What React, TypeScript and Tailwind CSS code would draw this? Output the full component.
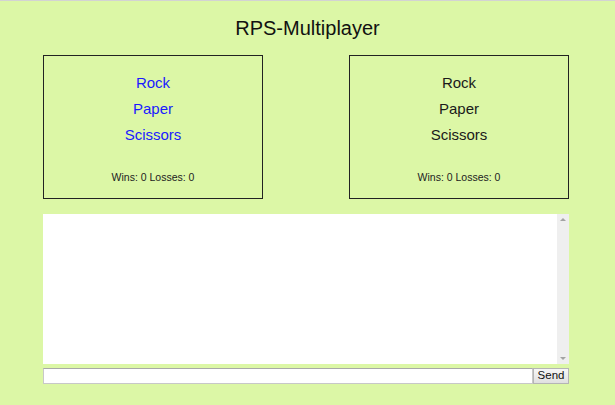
import React from "react";

function PlayerBox({ blue }: { blue?: boolean }) {
  const choiceColor = blue ? "text-[#1a1aff]" : "text-[#1a1a1a]";
  return (
    <div className="w-[220px] h-[144px] border border-[#222] flex flex-col items-center pt-[14px]">
      <div className={`flex flex-col items-center text-[15px] leading-[26px] ${choiceColor}`}>
        <span>Rock</span>
        <span>Paper</span>
        <span>Scissors</span>
      </div>
      <div className="mt-[23px] text-[10.5px] leading-[13px] text-[#222]">Wins: 0 Losses: 0</div>
    </div>
  );
}

export default function App() {
  return (
    <div className="min-h-[405px] bg-[#dcf7a6] border-t border-[#d3d3d3] font-['Liberation_Sans',Arial,sans-serif]">
      <h1 className="text-center text-[20px] leading-[23px] pt-[16px] text-[#111]">RPS-Multiplayer</h1>
      <div className="ml-[43px] w-[526px] mt-[15px]">
        <div className="flex justify-between">
          <PlayerBox blue />
          <PlayerBox />
        </div>
        <div className="mt-[15px] flex h-[150px] bg-white">
          <textarea className="flex-1 resize-none outline-none bg-white" readOnly />
          <div className="w-[12px] bg-[#efefef] flex flex-col items-center justify-between py-[4px]">
            <div className="w-0 h-0 border-l-[3px] border-r-[3px] border-b-[3px] border-l-transparent border-r-transparent border-b-[#a3a3a3]" />
            <div className="w-0 h-0 border-l-[3px] border-r-[3px] border-t-[3px] border-l-transparent border-r-transparent border-t-[#a3a3a3]" />
          </div>
        </div>
        <div className="mt-[4px] flex h-[16px]">
          <input className="flex-1 h-full bg-white border border-[#c8c8c8] border-t-[#a9a9a9] outline-none" />
          <button className="w-[36px] h-full text-[11.5px] leading-none text-[#111] border border-[#b5b5b5] bg-gradient-to-b from-[#f7f7f7] to-[#e0e0e0]">
            Send
          </button>
        </div>
      </div>
    </div>
  );
}
